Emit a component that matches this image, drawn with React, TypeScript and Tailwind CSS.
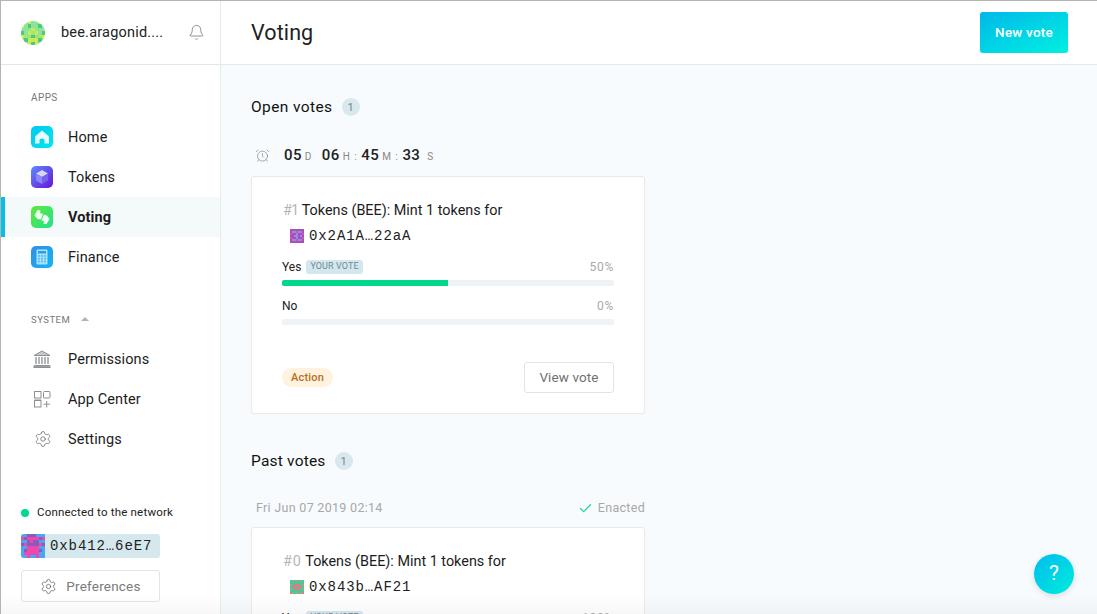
import React from "react";
import { Bell, AlarmClock, Check, Settings } from "lucide-react";

const font = { fontFamily: '"Roboto", "Noto Sans", sans-serif' };

function Identicon({ rows, palette, size, className = "" }: { rows: string[]; palette: Record<string, string>; size: number; className?: string }) {
  const n = rows.length;
  return (
    <svg width={size} height={size} viewBox={`0 0 ${n} ${n}`} shapeRendering="crispEdges" className={className}>
      {rows.flatMap((r, y) => r.split("").map((c, x) => <rect key={`${x}-${y}`} x={x} y={y} width={1} height={1} fill={palette[c]} />))}
    </svg>
  );
}

const HomeIcon = () => (
  <svg width="22" height="22" viewBox="0 0 22 22" className="shrink-0">
    <defs><linearGradient id="h" x1="0" y1="0" x2="1" y2="1"><stop offset="0" stopColor="#00c8f0" /><stop offset="1" stopColor="#00e8ec" /></linearGradient></defs>
    <rect width="22" height="22" rx="5" fill="url(#h)" />
    <path d="M11 4.5 L18 10.5 V17.5 H13.5 V13.5 Q11 11.5 8.5 13.5 V17.5 H4 V10.5 Z" fill="#fff" opacity="0.9" />
  </svg>
);
const TokensIcon = () => (
  <svg width="22" height="22" viewBox="0 0 22 22" className="shrink-0">
    <defs><linearGradient id="t" x1="0" y1="0" x2="1" y2="1"><stop offset="0" stopColor="#5b8cff" /><stop offset="1" stopColor="#6a12d8" /></linearGradient></defs>
    <rect width="22" height="22" rx="5" fill="url(#t)" />
    <path d="M11 4 L17 7.5 L11 11 L5 7.5 Z" fill="#d8d4fb" />
    <path d="M5 7.5 L11 11 V18 L5 14.5 Z" fill="#8f86f3" />
    <path d="M17 7.5 L11 11 V18 L17 14.5 Z" fill="#7560ea" />
  </svg>
);
const VotingIcon = () => (
  <svg width="22" height="22" viewBox="0 0 22 22" className="shrink-0">
    <defs><linearGradient id="v" x1="0" y1="0" x2="1" y2="1"><stop offset="0" stopColor="#62e838" /><stop offset="1" stopColor="#1fe38a" /></linearGradient></defs>
    <rect width="22" height="22" rx="5" fill="url(#v)" />
    <path d="M6.5 4 L9.5 4.5 L9 7 L12 8 L10 13.5 L6.5 13 L3.5 9.5 Z" fill="#fff" opacity="0.92" />
    <path d="M13 8.5 L16 9.5 L18.5 13 L15.5 18 L12.5 18 L13 15 L10.5 14.5 Z" fill="#fff" opacity="0.92" />
  </svg>
);
const FinanceIcon = () => (
  <svg width="22" height="22" viewBox="0 0 22 22" className="shrink-0">
    <defs><linearGradient id="f" x1="0" y1="0" x2="1" y2="1"><stop offset="0" stopColor="#2f8ee8" /><stop offset="1" stopColor="#12b6f2" /></linearGradient></defs>
    <rect width="22" height="22" rx="5" fill="url(#f)" />
    <rect x="5.5" y="3.5" width="11" height="15" rx="1" fill="#a9e3fb" />
    <rect x="7" y="5" width="8" height="2.5" fill="#2b9fe8" />
    {[0, 1, 2].flatMap((c) => [0, 1, 2].map((r) => <rect key={`${c}${r}`} x={7 + c * 3} y={9 + r * 2.8} width="2" height="1.8" fill="#5cbdf2" />))}
  </svg>
);
const PermIcon = () => (
  <svg width="22" height="22" viewBox="0 0 22 22" fill="none" stroke="#8d9092" strokeWidth="1" className="shrink-0">
    <path d="M3 7.5 L11 3 L19 7.5 Z" fill="#c8cacb" />
    <path d="M5 9 V16 M8 9 V16 M11 9 V16 M14 9 V16 M17 9 V16" strokeWidth="1.3" />
    <path d="M3.5 17.5 H18.5" strokeWidth="1" />
    <rect x="3" y="18" width="16" height="1.5" fill="#b0b2b3" />
  </svg>
);
const CenterIcon = () => (
  <svg width="22" height="22" viewBox="0 0 22 22" fill="none" stroke="#8d9092" strokeWidth="1" className="shrink-0">
    <rect x="3.5" y="3.5" width="6.5" height="6.5" />
    <rect x="12.5" y="3.5" width="6.5" height="6.5" rx="1" />
    <rect x="3.5" y="10" width="6.5" height="3" fill="#c4c6c7" stroke="none" />
    <rect x="3.5" y="12.5" width="6.5" height="6.5" />
    <path d="M15.7 13 V19.5 M12.5 16.2 H19" />
  </svg>
);

function NavItem({ icon, label, active }: { icon: React.ReactNode; label: string; active?: boolean }) {
  return (
    <div className={`flex h-10 items-center pl-[30px] ${active ? "relative bg-[#f4f9fa] font-bold" : ""}`}>
      {active && <div className="absolute left-0 top-0 h-full w-1 bg-[#08bee5]" />}
      <div className="flex w-[37px] shrink-0 items-center">{icon}</div>
      <span className="pt-[2px] text-[14.5px] tracking-[0.1px] text-[#1c1c1c]">{label}</span>
    </div>
  );
}

function Count({ className = "" }: { className?: string }) {
  return <span className={`flex h-[18px] w-[18px] items-center justify-center rounded-full bg-[#d9e8ee] pt-[2px] text-[11px] text-[#6f8690] ${className}`}>1</span>;
}

function Bar({ label, pct, fill, tag }: { label: string; pct: string; fill: string; tag?: boolean }) {
  return (
    <div>
      <div className="flex h-[15px] items-center justify-between">
        <div className="flex items-center text-[12px] text-[#222]">
          {label}
          {tag && <span className="ml-[5px] flex h-[14px] items-center rounded-[3px] bg-[#d5e7ee] px-[4px] text-[9px] tracking-[0.1px] text-[#6d8b98]">YOUR VOTE</span>}
        </div>
        <span className="text-[12px] tracking-[0.7px] text-[#a8a8a8]">{pct}</span>
      </div>
      <div className="mt-[6px] h-[6px] w-full overflow-hidden rounded-[2px] bg-[#edf3f6]">
        <div className="h-full bg-[#00d98b]" style={{ width: fill }} />
      </div>
    </div>
  );
}

function CardTitle({ num, numClass, addr, icon }: { num: string; numClass: string; addr: string; icon: React.ReactNode }) {
  return (
    <div className="pl-[31px] pt-[24px]">
      <div className="h-[18px] text-[14.4px] leading-[20px] text-[#1c1c1c]">
        <span className={`text-[#b5b5b5] ${numClass}`}>{num}</span> Tokens (BEE): Mint 1 tokens for
      </div>
      <div className="mt-[8px] flex h-[18px] items-center pl-[7px]">
        {icon}
        <span className="ml-[5px] text-[14px] tracking-[0.9px] text-[#222]" style={{ fontFamily: '"Liberation Mono", monospace' }}>{addr}</span>
      </div>
    </div>
  );
}

const userPal = { a: "#8ee39a", b: "#c9ec55", c: "#4cc97b", d: "#a6e86a" };
const userRows = ["aabaaba", "bacaaca", "aaabaaa", "cabdbac", "bdacadb", "acbbbca", "aabcbaa"];
const addrPal = { p: "#ee47ae", b: "#4aa6ee", v: "#8a5bb8" };
const addrRows = ["bbvvvbbb", "pvppppvp", "bbvpvvbb", "vpvvvvpv", "bbppppbb", "bvppppvb", "bpppppbb", "bbpbbpbb"];
const a1Pal = { p: "#b04bbd", l: "#8f8fdb", d: "#c659b6" };
const a1Rows = ["ppppppp", "plldllp", "dpplppd", "ppllplp", "dpplppd", "plldllp", "ppppppp"];
const a2Pal = { g: "#4ec596", r: "#d97f7f", m: "#8fb089" };
const a2Rows = ["gmgmgmg", "ggggggg", "mgrrrgm", "grrgrrg", "mgrrrgm", "ggggggg", "rmgmgmr"];

export default function App() {
  return (
    <div className="relative flex h-[614px] w-[1097px] overflow-hidden border-t border-l border-[#b4b4b4] bg-[#f7fbfd]" style={font}>
      <aside className="flex h-full w-[220px] shrink-0 flex-col border-r border-[#e8ebec] bg-white">
        <div className="flex h-[64px] shrink-0 items-center border-b border-[#e3e6e7] pl-[20px] pr-[15px]">
          <Identicon rows={userRows} palette={userPal} size={24} className="rounded-full" />
          <span className="ml-[16px] flex-1 text-[14.5px] tracking-[0.2px] text-[#222]">bee.aragonid....</span>
          <Bell size={17} strokeWidth={1} color="#666" />
        </div>
        <div className="pl-[30px] pt-[26px] text-[10px] leading-[13px] tracking-[0.4px] text-[#777]">APPS</div>
        <div className="mt-[13px]">
          <NavItem icon={<HomeIcon />} label="Home" />
          <NavItem icon={<TokensIcon />} label="Tokens" />
          <NavItem icon={<VotingIcon />} label="Voting" active />
          <NavItem icon={<FinanceIcon />} label="Finance" />
        </div>
        <div className="mt-[37px] flex h-[13px] items-center pl-[30px] text-[9.5px] tracking-[0.5px] text-[#777]">
          SYSTEM
          <span className="ml-[11px] mb-[4px] h-0 w-0 border-x-[4px] border-b-[4px] border-x-transparent border-b-[#b3b3b3]" />
        </div>
        <div className="mt-[12px]">
          <NavItem icon={<PermIcon />} label="Permissions" />
          <NavItem icon={<CenterIcon />} label="App Center" />
          <NavItem icon={<div className="pl-[3px]"><Settings size={18} strokeWidth={1} color="#666" /></div>} label="Settings" />
        </div>
        <div className="mt-auto px-[20px] pb-[12px]">
          <div className="flex h-[16px] items-center text-[11.5px] tracking-[0.2px] text-[#222]">
            <span className="mr-[8px] h-2 w-2 rounded-full bg-[#00d98b]" />
            Connected to the network
          </div>
          <div className="mt-[13px] flex h-[24px] w-[139px] items-center overflow-hidden rounded-[3px] bg-[#d5e8ee]">
            <Identicon rows={addrRows} palette={addrPal} size={24} />
            <span className="ml-[5px] text-[14px] tracking-[0.9px] text-[#222]" style={{ fontFamily: '"Liberation Mono", monospace' }}>0xb412…6eE7</span>
          </div>
          <div className="mt-[12px] flex h-[32px] w-[139px] items-center justify-center gap-[9px] rounded-[3px] border border-[#e2e5e6] bg-white text-[13.5px] tracking-[0.2px] text-[#7a7a7a]">
            <Settings size={17} strokeWidth={1} color="#555" />
            Preferences
          </div>
        </div>
      </aside>
      <main className="min-w-0 flex-1 overflow-hidden">
        <header className="flex h-[64px] items-center justify-between border-b border-[#e3e8ea] bg-white pl-[30px] pr-[29px]">
          <h1 className="pt-[2px] text-[21.5px] tracking-[0.1px] text-[#222]">Voting</h1>
          <button className="h-[41px] w-[88px] rounded-[3px] bg-gradient-to-br from-[#00b8e8] to-[#00f0e0] text-[13.5px] font-medium tracking-[0.2px] text-white">New vote</button>
        </header>
        <div className="pl-[30px]">
          <div className="flex items-center pt-[32px]">
            <h2 className="text-[15.5px] leading-[20px] tracking-[0.4px] text-[#111]">Open votes</h2>
            <Count className="ml-[9px]" />
          </div>
          <div className="mt-[28px] flex h-[20px] items-center pl-[4px]">
            <AlarmClock size={15} strokeWidth={1} color="#777" />
            <div className="ml-[14px] flex items-baseline text-[15px] font-medium tracking-[0.4px] text-[#222]">
              05<span className="ml-[3px] text-[10px] font-normal text-[#888]">D</span>
              <span className="ml-[10px]">06</span><span className="ml-[3px] text-[10px] font-normal text-[#888]">H</span>
              <span className="mx-[4px] text-[11px] font-normal text-[#999]">:</span>45
              <span className="ml-[3px] text-[10px] font-normal text-[#888]">M</span>
              <span className="mx-[4px] text-[11px] font-normal text-[#999]">:</span>33
              <span className="ml-[7px] text-[10px] font-normal text-[#888]">S</span>
            </div>
          </div>
          <section className="mt-[11px] h-[238px] w-[394px] rounded-[3px] border border-[#e6eaec] bg-white">
            <CardTitle num="#1" numClass="tracking-[-0.8px]" addr="0x2A1A…22aA" icon={<Identicon rows={a1Rows} palette={a1Pal} size={14} />} />
            <div className="px-[30px] pt-[14px]">
              <Bar label="Yes" pct="50%" fill="50%" tag />
              <div className="mt-[12px]"><Bar label="No" pct="0%" fill="0%" /></div>
            </div>
            <div className="mt-[37px] flex items-center justify-between px-[30px]">
              <span className="flex h-[19px] items-center rounded-full bg-[#fff2de] px-[9px] pt-[1px] text-[11px] font-medium tracking-[0.2px] text-[#b5701b]">Action</span>
              <button className="h-[31px] w-[90px] rounded-[3px] border border-[#e2e5e6] bg-white text-[13.5px] tracking-[0.1px] text-[#707070]">View vote</button>
            </div>
          </section>
          <div className="mt-[37px] flex items-center">
            <h2 className="text-[15.5px] leading-[20px] tracking-[0.2px] text-[#111]">Past votes</h2>
            <Count className="ml-[9px]" />
          </div>
          <div className="mt-[27px] flex h-[20px] w-[394px] items-center justify-between pl-[5px] text-[12.5px] tracking-[0.3px] text-[#a8a8a8]">
            <span>Fri Jun 07 2019 02:14</span>
            <span className="flex items-center gap-[5px]"><Check size={15} strokeWidth={2} color="#1fd99a" />Enacted</span>
          </div>
          <section className="mt-[9px] h-[238px] w-[394px] rounded-[3px] border border-[#e6eaec] bg-white">
            <CardTitle num="#0" numClass="tracking-[1px]" addr="0x843b…AF21" icon={<Identicon rows={a2Rows} palette={a2Pal} size={14} />} />
            <div className="px-[30px] pt-[14px]">
              <Bar label="Yes" pct="100%" fill="100%" tag />
            </div>
          </section>
        </div>
      </main>
      <div className="pointer-events-none absolute bottom-0 left-0 h-[20px] w-full bg-gradient-to-b from-transparent to-[#00000008]" />
      <button className="absolute left-[1033px] top-[553px] flex h-10 w-10 items-center justify-center rounded-full bg-gradient-to-br from-[#00bcec] to-[#00ecdc] text-[21px] text-white shadow-[0_2px_6px_rgba(0,0,0,0.12)]">?</button>
    </div>
  );
}
